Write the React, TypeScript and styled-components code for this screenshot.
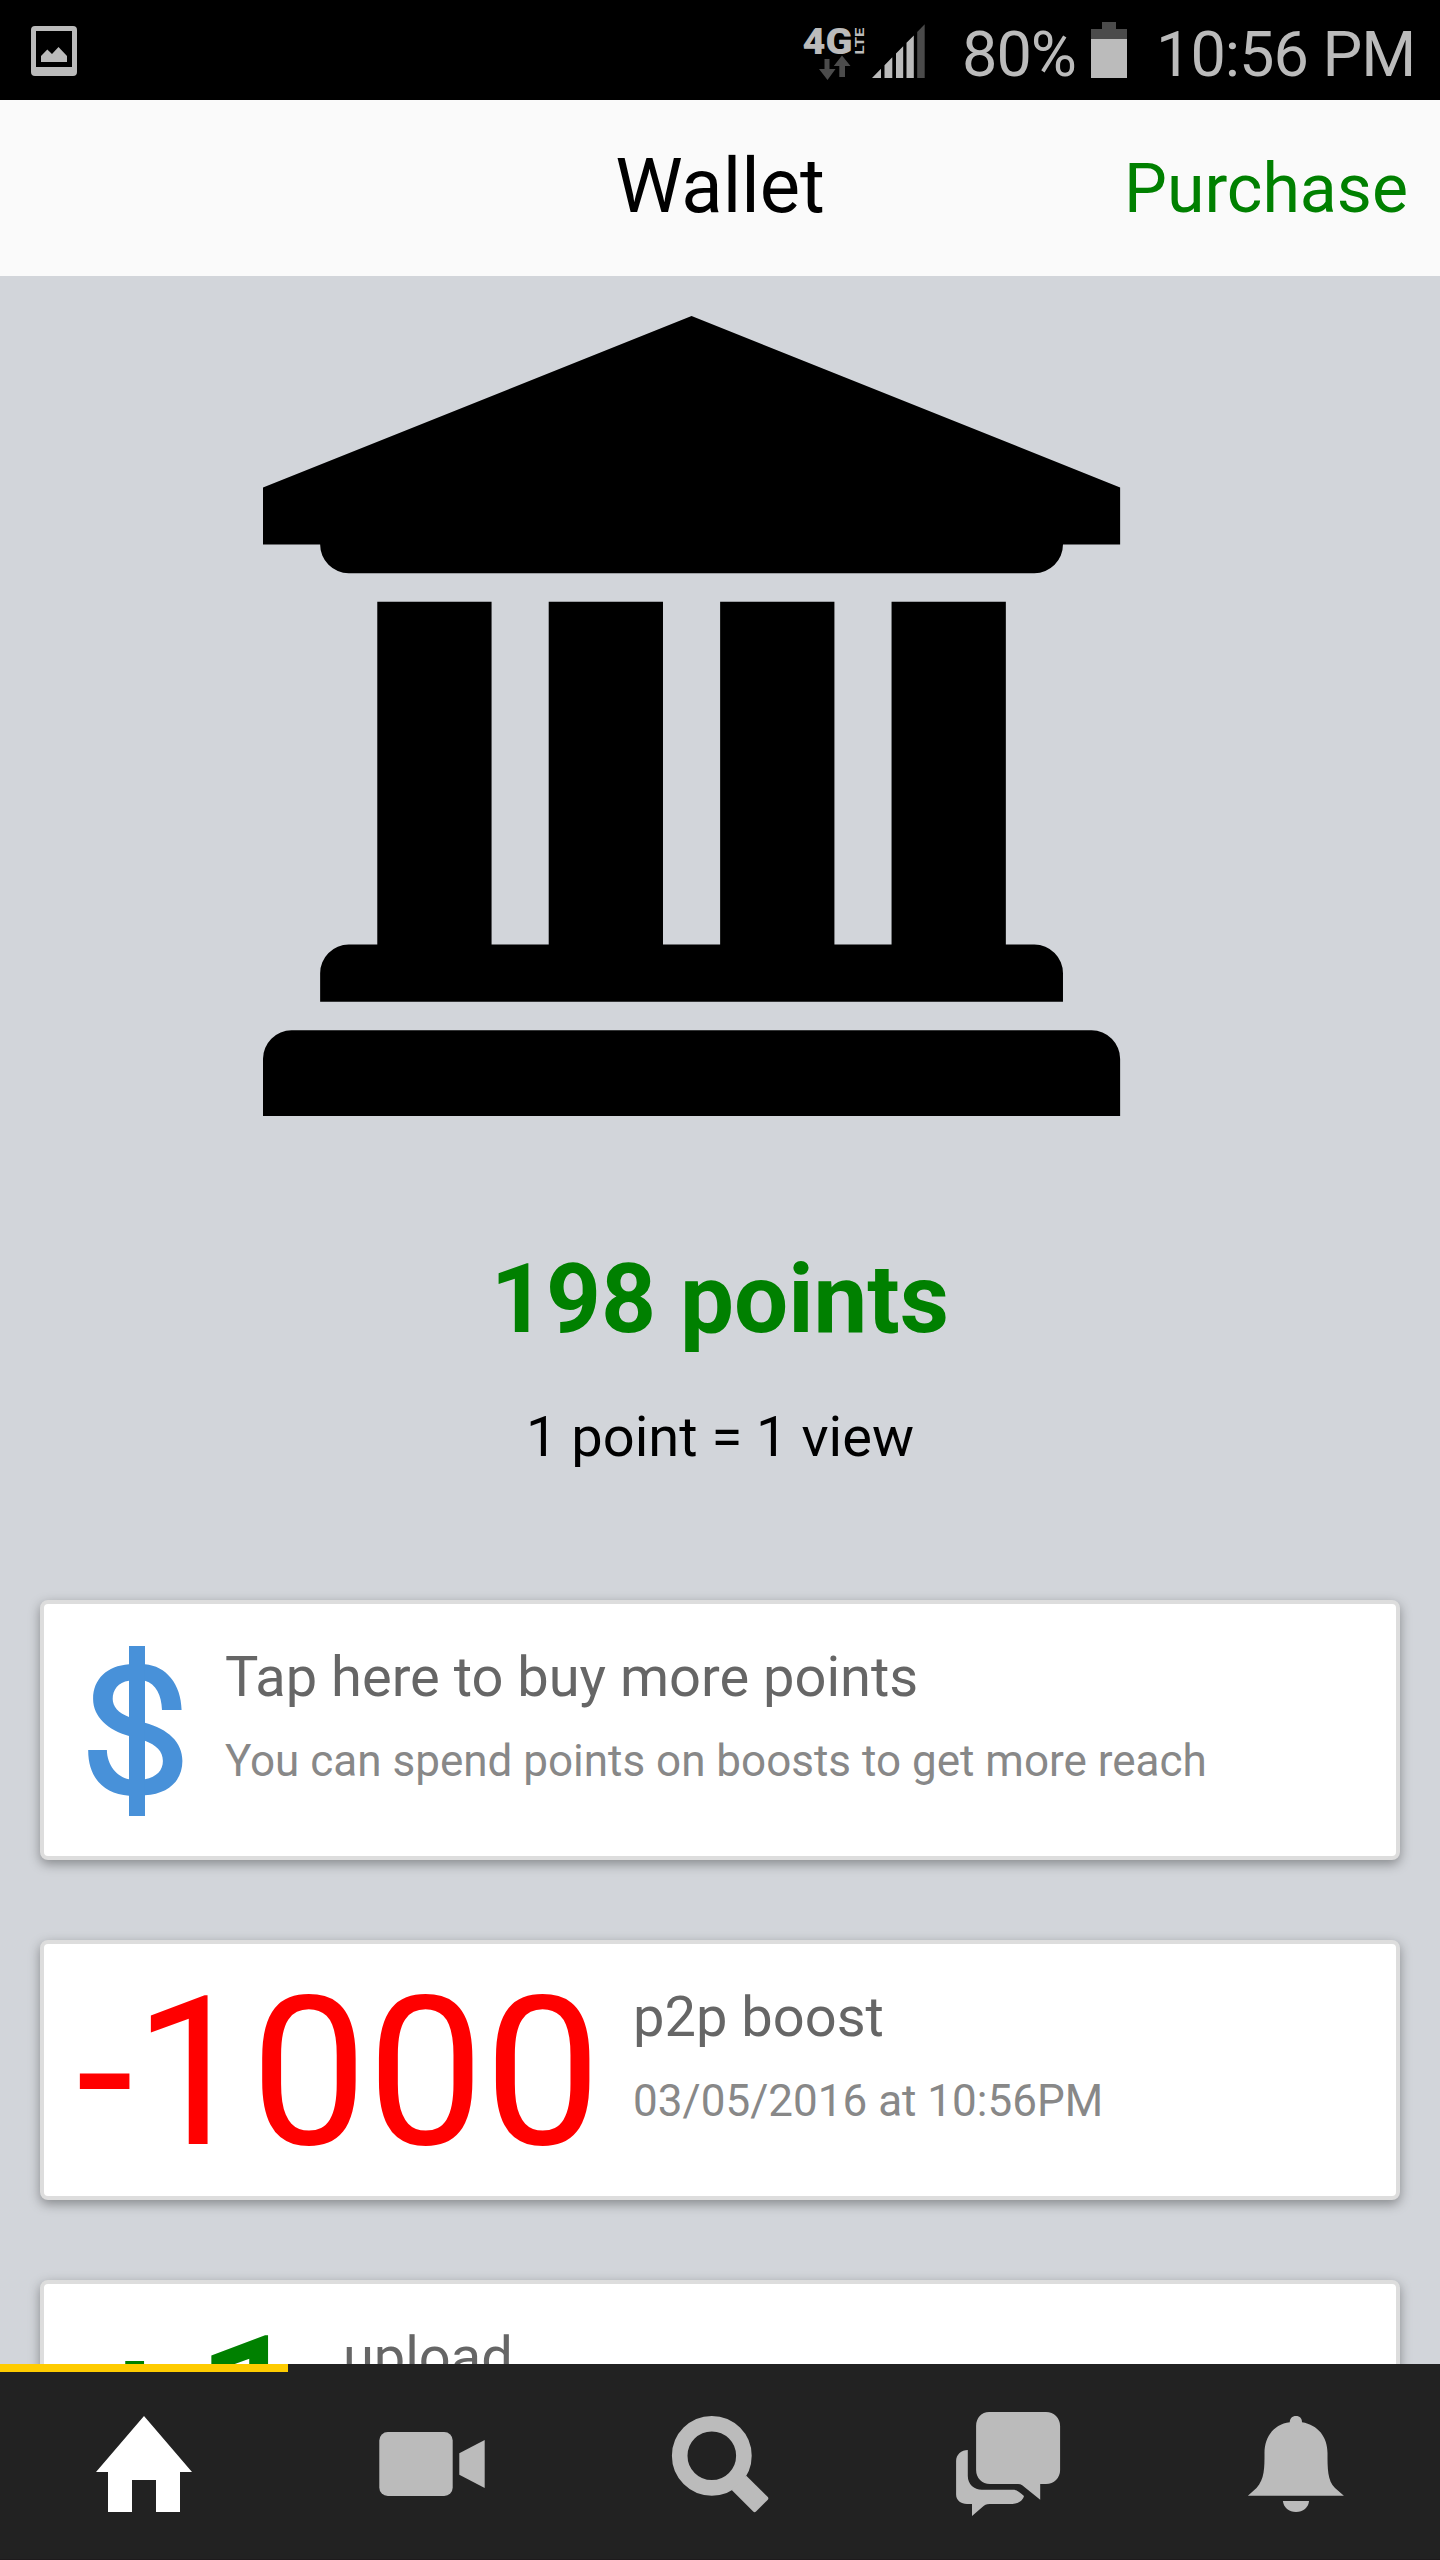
import React from 'react';
import styled, { createGlobalStyle } from 'styled-components';

const GlobalStyle = createGlobalStyle`
  *, *::before, *::after { box-sizing: border-box; }
  html, body { margin: 0; padding: 0; background: #d2d5da; }
  body { font-family: Roboto, 'Liberation Sans', sans-serif; }
  svg { display: block; flex: none; }
`;

const Screen = styled.div`
  display: flex;
  flex-direction: column;
  width: 1440px;
  height: 2560px;
  overflow: hidden;
  background: #d2d5da;
`;

const StatusBar = styled.div`
  display: flex;
  align-items: flex-start;
  flex: none;
  height: 100px;
  padding-left: 31px;
  background: #000;
  color: #bbb;
`;

const ShotIcon = styled.svg`
  margin: 26px auto 0 0;
`;

const NetworkIcon = styled.svg`
  margin: 26px 7px 0 0;
  font-family: Roboto, 'Liberation Sans', sans-serif;
  font-weight: 700;
`;

const SignalIcon = styled.svg`
  margin-top: 24px;
`;

const StatusText = styled.span<{ $width: number; $gap: number }>`
  width: ${(p) => p.$width}px;
  margin: 17px 0 0 ${(p) => p.$gap}px;
  font-size: 63px;
  line-height: 75px;
  letter-spacing: -1px;
  white-space: nowrap;
`;

const BatteryIcon = styled.svg`
  margin: 22px 0 0 12px;
`;

const Header = styled.header`
  display: grid;
  grid-template-columns: 1fr auto 1fr;
  align-items: center;
  flex: none;
  height: 176px;
  padding: 0 32px;
  background: #fafafa;
`;

const HeaderTitle = styled.h1`
  grid-column: 2;
  margin: 0 0 4px;
  font-size: 76px;
  font-weight: 400;
  line-height: 89px;
  color: #000;
`;

const HeaderAction = styled.button`
  justify-self: end;
  padding: 2px 0 0;
  border: 0;
  background: none;
  font: inherit;
  font-size: 68px;
  line-height: 80px;
  color: #008000;
`;

const Content = styled.main`
  display: flex;
  flex-direction: column;
  flex: 1;
  min-height: 0;
  overflow: hidden;
  padding: 40px 40px 0;
`;

const BankIcon = styled.svg`
  margin-left: 223.4px;
`;

const Balance = styled.div`
  margin-top: 127px;
  font-size: 96px;
  font-weight: 700;
  line-height: 112px;
  text-align: center;
  color: #008000;
`;

const Rate = styled.div`
  margin: 49px 0 130px;
  font-size: 56px;
  line-height: 66px;
  text-align: center;
  color: #000;
`;

const CardList = styled.div`
  display: flex;
  flex-direction: column;
  gap: 80px;
`;

const Card = styled.article`
  display: flex;
  align-items: flex-start;
  gap: 32px;
  flex: none;
  height: 260px;
  padding: 0 32px;
  border: 4px solid #ddd;
  border-radius: 8px;
  background: #fff;
  box-shadow: 0 4px 12px rgba(0, 0, 0, 0.36);
`;

const Dollar = styled.svg`
  margin: 42px 10px 0 12px;
`;

const Amount = styled.span<{ $color: string }>`
  margin-top: 25px;
  font-size: 208px;
  line-height: 208px;
  color: ${(p) => p.$color};
`;

const CardText = styled.div`
  display: flex;
  flex-direction: column;
  gap: 25px;
  padding-top: 40px;
`;

const CardTitle = styled.div`
  font-size: 56px;
  line-height: 66px;
  color: #666;
`;

const CardDetail = styled.div`
  font-size: 44px;
  line-height: 52px;
  color: #888;
`;

const TabBar = styled.nav`
  display: grid;
  grid-template-columns: repeat(5, 1fr);
  flex: none;
  height: 196px;
  background: #222;
  border-bottom: 1px solid #1d1a1c;
`;

const Tab = styled.button<{ $active?: boolean }>`
  display: flex;
  align-items: center;
  justify-content: center;
  padding: 5px 0 0;
  border: 0;
  background: none;
  color: ${(p) => (p.$active ? '#fff' : '#bbb')};
  box-shadow: ${(p) => (p.$active ? 'inset 0 8px 0 #fc0' : 'none')};
`;

const Screenshot = () => (
  <ShotIcon width="46" height="50" viewBox="0 0 46 50" fill="#bbb">
    <path fillRule="evenodd" d="M4 0H42A4 4 0 0 1 46 4V46A4 4 0 0 1 42 50H4A4 4 0 0 1 0 46V4A4 4 0 0 1 4 0ZM5 5V41H41V5Z" />
    <path d="M10 30L16.3 23.5L21 28L27.5 21L36 30V36H10Z" />
  </ShotIcon>
);

const Network = () => (
  <NetworkIcon width="62" height="56" viewBox="0 0 62 56" fill="#bbb">
    <text x="-0.5" y="28" fontSize="36" fontWeight="900" textLength="50" lengthAdjust="spacingAndGlyphs">4G</text>
    <text transform="translate(60.5 28.5) rotate(-90)" fontSize="13.5" textLength="27" lengthAdjust="spacingAndGlyphs">LTE</text>
    <path fill="#4b4b4b" d="M21.5 33H26.5V43H32.5L24.5 54L16 43H21.5Z" />
    <path fill="#4b4b4b" d="M39 29.5L47.5 40H42V51H36.3V40H30.8Z" />
  </NetworkIcon>
);

const Signal = () => (
  <SignalIcon width="53" height="54" viewBox="0 0 53 54" fill="#bbb">
    <path d="M0 54L9 44.8V54ZM12.5 54V41.2L20.3 33.3V54ZM24 54V29.5L31.2 22.2V54ZM34.5 54V18.8L41.8 11.4V54Z" />
    <path fill="#4b4b4b" d="M45.2 54V7.9L52.7 0.3V54Z" />
  </SignalIcon>
);

const Battery = () => (
  <BatteryIcon width="36" height="56" viewBox="0 0 36 56">
    <path fill="#4b4b4b" d="M11 0H25V7H36V17H0V7H11Z" />
    <path fill="#bbb" d="M0 17H36V56H0Z" />
  </BatteryIcon>
);

const Bank = () => (
  <BankIcon width="857.14" height="800" viewBox="0 0 30 28" fill="#000">
    <path d="M15 0L30 6V8H28A1 1 0 0 1 27 9H3A1 1 0 0 1 2 8H0V6Z" />
    <path d="M4 10H8V22H10V10H14V22H16V10H20V22H22V10H26V22H27A1 1 0 0 1 28 23V24H2V23A1 1 0 0 1 3 22H4Z" />
    <path d="M1 25H29A1 1 0 0 1 30 26V28H0V26A1 1 0 0 1 1 25Z" />
  </BankIcon>
);

const DollarSign = () => (
  <Dollar width="95" height="170" viewBox="88 1646 95 170" fill="#4891d9">
    <path d="M129 1646H145V1816H129Z" />
    <path d="M144.9 1664.3C166 1666 181 1684 181.6 1710H162C161.5 1695 156 1684 144.9 1680.7Z" />
    <path d="M129 1664.3C107 1666 93.1 1679 93.1 1699C93.1 1717 108 1730 129 1736V1717C118 1713 112.7 1706 112.7 1699C112.7 1690 118 1682 129 1680.7Z" />
    <path d="M144.9 1722.7C168 1729 182.4 1742 182.4 1761C182.4 1781 168 1794 144.9 1795.3V1779.3C157 1777 162.9 1770 162.9 1761C162.9 1751 156 1745 144.9 1740.7Z" />
    <path d="M88.2 1750H106.9C107 1765 117 1777 129 1779.3V1795.7C104 1794 88 1778 88.2 1750Z" />
  </Dollar>
);

const TabIcon = ({ left, children }: { left: number; children: React.ReactNode }) => (
  <svg width="120" height="120" viewBox={`${left} 2404 120 120`} fill="currentColor">
    {children}
  </svg>
);

const cards = [
  {
    lead: <DollarSign />,
    title: 'Tap here to buy more points',
    detail: 'You can spend points on boosts to get more reach',
  },
  {
    lead: <Amount $color="#f00">-1000</Amount>,
    title: 'p2p boost',
    detail: '03/05/2016 at 10:56PM',
  },
  {
    lead: <Amount $color="#008000">+1</Amount>,
    title: 'upload',
    detail: '',
  },
];

export default function App() {
  return (
    <>
      <GlobalStyle />
      <Screen>
        <StatusBar>
          <Screenshot />
          <Network />
          <Signal />
          <StatusText $width={117} $gap={37}>80%</StatusText>
          <Battery />
          <StatusText $width={284} $gap={29}>10:56 PM</StatusText>
        </StatusBar>
        <Header>
          <HeaderTitle>Wallet</HeaderTitle>
          <HeaderAction>Purchase</HeaderAction>
        </Header>
        <Content>
          <Bank />
          <Balance>198 points</Balance>
          <Rate>1 point = 1 view</Rate>
          <CardList>
            {cards.map((card) => (
              <Card key={card.title}>
                {card.lead}
                <CardText>
                  <CardTitle>{card.title}</CardTitle>
                  {card.detail && <CardDetail>{card.detail}</CardDetail>}
                </CardText>
              </Card>
            ))}
          </CardList>
        </Content>
        <TabBar>
          <Tab $active aria-label="Home">
            <TabIcon left={84}>
              <path d="M144 2416L192 2472H180V2512H156V2480H132V2512H108V2472H96Z" />
            </TabIcon>
          </Tab>
          <Tab aria-label="Video">
            <TabIcon left={372}>
              <rect x="379.3" y="2432" width="73.4" height="64" rx="8.5" />
              <path d="M459.3 2453.2L484.7 2440V2488L459.3 2474.8Z" />
            </TabIcon>
          </Tab>
          <Tab aria-label="Search">
            <TabIcon left={660}>
              <circle cx="711.8" cy="2455.8" r="32.1" fill="none" stroke="currentColor" strokeWidth="15.6" />
              <path d="M746.3 2475.7L767.8 2496.9Q769 2498.4 767.8 2499.8L756 2511.6Q754.6 2512.8 753.2 2511.6L731.7 2490Z" />
            </TabIcon>
          </Tab>
          <Tab aria-label="Messages">
            <TabIcon left={948}>
              <path d="M989.1 2412H1046C1054 2412 1060.1 2418 1060.1 2426V2470C1060.1 2478 1054 2484 1046 2484H1040.2V2499.7L1022.2 2485.3Q1020.5 2484 1018 2484H990C982 2484 976.1 2478 976.1 2470V2426C976.1 2418 981.5 2412 989.1 2412Z" />
              <path d="M967.8 2450V2476C967.8 2484 974 2489.8 982 2489.8H1013C1017.5 2489.8 1019.5 2492.6 1024 2496C1023 2500.5 1018 2503.9 1012.5 2503.9H989.5C986 2503.9 984.5 2505.2 983.3 2506.2L972 2516V2503.9H967C961 2503.9 956.1 2500.5 956.1 2494.5V2461C956.1 2454.5 961.5 2450 967.8 2450Z" />
            </TabIcon>
          </Tab>
          <Tab aria-label="Notifications">
            <TabIcon left={1236}>
              <path d="M1289.8 2422.3C1289.8 2418.5 1292 2416 1296 2416C1300 2416 1302 2418.5 1302 2422.3C1318 2425 1327.5 2437 1327.5 2453C1327.5 2468 1327.5 2481 1335 2488L1343.9 2495.8H1247.9L1256.5 2488C1264.5 2479 1264.5 2468 1264.5 2453C1264.5 2437 1274 2424 1289.8 2422.3Z" />
              <path d="M1282.9 2501H1309.1C1308.5 2507.5 1303 2512 1296 2512C1289 2512 1283.5 2507.5 1282.9 2501Z" />
            </TabIcon>
          </Tab>
        </TabBar>
      </Screen>
    </>
  );
}
